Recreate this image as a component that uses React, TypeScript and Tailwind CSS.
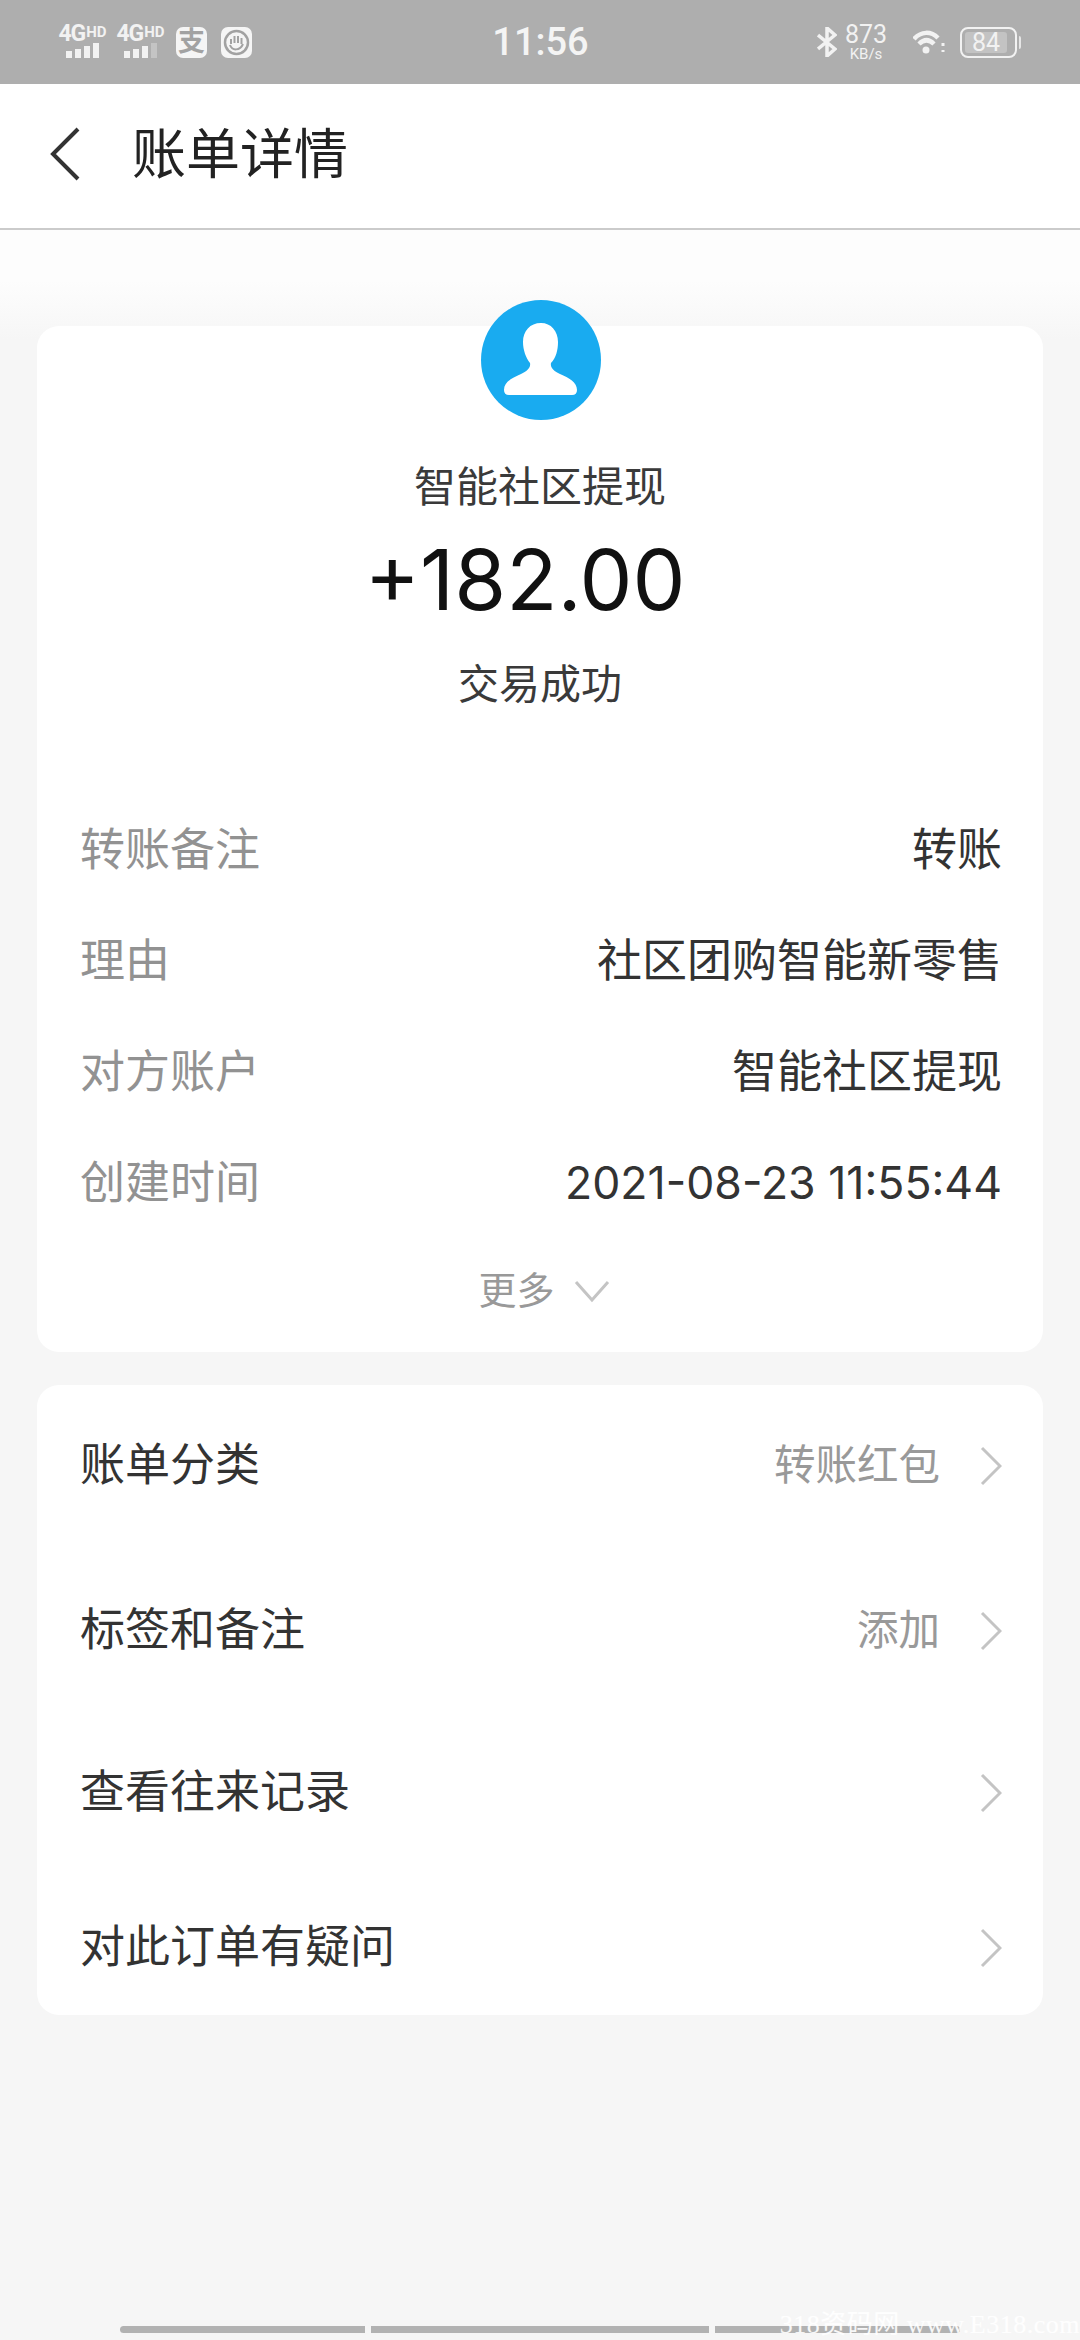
import { ReactNode } from 'react'

const DETAILS = [
  { label: '转账备注', value: '转账', valueClass: 'text-[45px]' },
  { label: '理由', value: '社区团购智能新零售', valueClass: 'text-[45px]' },
  { label: '对方账户', value: '智能社区提现', valueClass: 'text-[45px]' },
  {
    label: '创建时间',
    value: '2021-08-23 11:55:44',
    valueClass: 'text-[44.6px] [font-family:Inter,sans-serif]',
  },
]

const ACTIONS = [
  { label: '账单分类', value: '转账红包', spacing: 'mt-0' },
  { label: '标签和备注', value: '添加', spacing: 'mt-[85px]' },
  { label: '查看往来记录', value: '', spacing: 'mt-[82px]' },
  { label: '对此订单有疑问', value: '', spacing: 'mt-[75px]' },
]

function Signal({ bars }: { bars: string[] }) {
  return (
    <div className="w-[45px] h-[32px] flex flex-col items-center">
      <div className="h-[15px] flex items-start leading-none font-bold text-[#f2f2f2]">
        <span className="text-[23px] leading-[16px] tracking-[-1px]">4G</span>
        <span className="text-[15px] leading-[12px] ml-[1px]">HD</span>
      </div>
      <div className="mt-[2px] flex items-end gap-[3px] h-[15px]">
        {bars.map((b, i) => (
          <div key={i} className={b} />
        ))}
      </div>
    </div>
  )
}

function AppBadge({ children }: { children: ReactNode }) {
  return (
    <div className="w-[31px] h-[31px] rounded-[7px] bg-[#f5f5f5] flex items-center justify-center overflow-hidden">
      {children}
    </div>
  )
}

function Chevron() {
  return (
    <svg width="22" height="40" viewBox="0 0 22 40" fill="none" className="shrink-0">
      <path d="M2 2 L20 20 L2 38" stroke="#c4c4c4" strokeWidth="3" />
    </svg>
  )
}

export default function App() {
  return (
    <div className="w-[1080px] h-[2340px] flex flex-col overflow-hidden relative bg-[#f6f6f6] [font-family:Roboto,'Noto_Sans_CJK_SC',sans-serif]">
      {/* status bar */}
      <div className="h-[84px] shrink-0 bg-[#aeaeae] pl-[60px] pr-[59px] grid grid-cols-[1fr_auto_1fr] items-center">
        <div className="flex items-center">
          <Signal
            bars={[
              'w-[6px] h-[7px] bg-[#f2f2f2]',
              'w-[6px] h-[9px] bg-[#f2f2f2]',
              'w-[6px] h-[12px] bg-[#f2f2f2]',
              'w-[6px] h-[15px] bg-[#f2f2f2]',
            ]}
          />
          <div className="ml-[13px]">
            <Signal
              bars={[
                'w-[6px] h-[7px] bg-[#f2f2f2]',
                'w-[6px] h-[9px] bg-[#f2f2f2]',
                'w-[6px] h-[12px] bg-[#f2f2f2]',
                'w-[6px] h-[15px] bg-[#c4c4c4]',
              ]}
            />
          </div>
          <div className="ml-[13px]">
            <AppBadge>
              <span className="text-[27px] leading-none font-bold text-[#a2a2a2]">支</span>
            </AppBadge>
          </div>
          <div className="ml-[14px]">
            <AppBadge>
              <svg width="27" height="27" viewBox="0 0 27 27" fill="none" stroke="#a2a2a2">
                <circle cx="13.5" cy="13.5" r="11.5" strokeWidth="2.5" />
                <path d="M8 10 V15 M11.5 7 V14 M15 7 V14 M18.5 9 V15 M7 16 C9 22 17 22 20 15" strokeWidth="2" />
              </svg>
            </AppBadge>
          </div>
        </div>

        <div className="text-[38px] leading-none text-[#f4f4f4] font-medium">11:56</div>

        <div className="flex items-center justify-end">
          <svg width="20" height="30" viewBox="0 0 20 30" fill="none" stroke="#f2f2f2" strokeWidth="3.5">
            <path d="M1 8 L18 22 L10 29 V1 L18 8 L1 22" />
          </svg>
          <div className="ml-[8px] w-[42px] flex flex-col items-center text-[#f2f2f2]">
            <span className="text-[25px] leading-[25px]">873</span>
            <span className="text-[15px] leading-[15px]">KB/s</span>
          </div>
          <svg width="32" height="24" viewBox="0 0 32 24" className="ml-[26px]" fill="none" stroke="#f2f2f2">
            <path d="M1 9 C8 1 18 1 25 8" strokeWidth="4.5" />
            <path d="M6 14 C11 9 16 9 21 14" strokeWidth="4.5" />
            <circle cx="13" cy="20" r="3.5" fill="#f2f2f2" stroke="none" />
            <path d="M30 13 V16 M30 20 V22" strokeWidth="3" />
          </svg>
          <div className="ml-[15px] w-[57px] h-[31px] rounded-[8px] border-2 border-[#f2f2f2] p-[3px]">
            <div className="w-[42px] h-full rounded-[3px] bg-[#d0d0d0]/60 flex items-center justify-center text-[25px] leading-none text-[#f2f2f2]">
              84
            </div>
          </div>
          <div className="ml-[2px] w-[2px] h-[13px] bg-[#e6e6e6] rounded-r-sm" />
        </div>
      </div>

      {/* header */}
      <div className="h-[146px] shrink-0 bg-white border-b-2 border-[#cbcbcb] flex items-center">
        <svg width="36" height="56" viewBox="0 0 36 56" fill="none" className="ml-[47px] mb-[4px]">
          <path d="M31 3 L6 28 L31 53" stroke="#333333" strokeWidth="4" />
        </svg>
        <h1 className="ml-[49px] text-[54px] leading-none font-normal text-[#222222]">账单详情</h1>
      </div>

      {/* main */}
      <div className="grow pl-[37px] pt-[96px] flex flex-col bg-[linear-gradient(#fdfdfd_0,#fdfdfd_50px,#f6f6f6_110px)]">
        <section className="w-[1006px] h-[1026px] bg-white rounded-[22px] flex flex-col items-center">
          <div className="-mt-[26px] ml-[1px] w-[120px] h-[120px] rounded-full bg-[#19abf0]">
            <svg width="120" height="120" viewBox="0 0 120 120" fill="#ffffff">
              <path d="M60 23 C49 23 42 31 42 42 C42 50 45 58 49 63 C50 68 46 71 40 74 C31 78 23 82 23 90 Q23 95 28 95 H91 Q96 95 96 90 C96 82 88 78 79 74 C73 71 69 68 70 63 C75 58 77 50 77 42 C77 31 70 23 60 23 Z" />
            </svg>
          </div>
          <div className="mt-[38px] h-[60px] leading-[60px] text-[42px] text-[#3a3a3a]">智能社区提现</div>
          <div className="mt-[12px] mr-[30px] h-[100px] leading-[100px] text-[84px] text-[#111111] [font-family:Inter,sans-serif]">
            +182.00
          </div>
          <div className="mt-[25px] h-[60px] leading-[60px] text-[41px] text-[#3a3a3a]">交易成功</div>

          <div className="mt-[80px] w-full pl-[43px] pr-[41px] flex flex-col">
            {DETAILS.map((d) => (
              <div key={d.label} className="h-[111px] flex items-center justify-between">
                <span className="text-[45px] text-[#929292]">{d.label}</span>
                <span className={`text-[#333333] ${d.valueClass}`}>{d.value}</span>
              </div>
            ))}
          </div>

          <div className="mt-[27px] ml-[8px] h-[50px] flex items-center text-[38px] text-[#999999]">
            更多
            <svg width="36" height="24" viewBox="0 0 36 24" fill="none" className="ml-[19px]">
              <path d="M2 3 L18 21 L34 3" stroke="#c4c4c4" strokeWidth="3" />
            </svg>
          </div>
        </section>

        <section className="mt-[33px] w-[1006px] h-[630px] bg-white rounded-[22px] pt-[41px] pl-[43px] pr-[41px] flex flex-col">
          {ACTIONS.map((a) => (
            <div key={a.label} className={`h-[80px] flex items-center ${a.spacing}`}>
              <span className="text-[45px] text-[#333333]">{a.label}</span>
              {a.value && <span className="ml-auto text-[41.5px] text-[#999999]">{a.value}</span>}
              <div className={a.value ? 'ml-[40px]' : 'ml-auto'}>
                <Chevron />
              </div>
            </div>
          ))}
        </section>
      </div>

      {/* gesture bar */}
      <div className="h-[10px] mb-[4px] shrink-0 pl-[120px] flex gap-[6px]">
        <div className="w-[245px] h-[7px] rounded-l-full bg-[#b2b2b2]" />
        <div className="w-[338px] h-[7px] bg-[#b2b2b2]" />
        <div className="w-[245px] h-[7px] rounded-r-full bg-[#b2b2b2]" />
      </div>
      <div className="absolute right-0 bottom-0 text-[26px] leading-[30px] tracking-[0.5px] whitespace-nowrap text-white/90 [font-family:'Liberation_Serif','Noto_Sans_CJK_SC',serif]">
        318资码网 www.E318.com
      </div>
    </div>
  )
}
